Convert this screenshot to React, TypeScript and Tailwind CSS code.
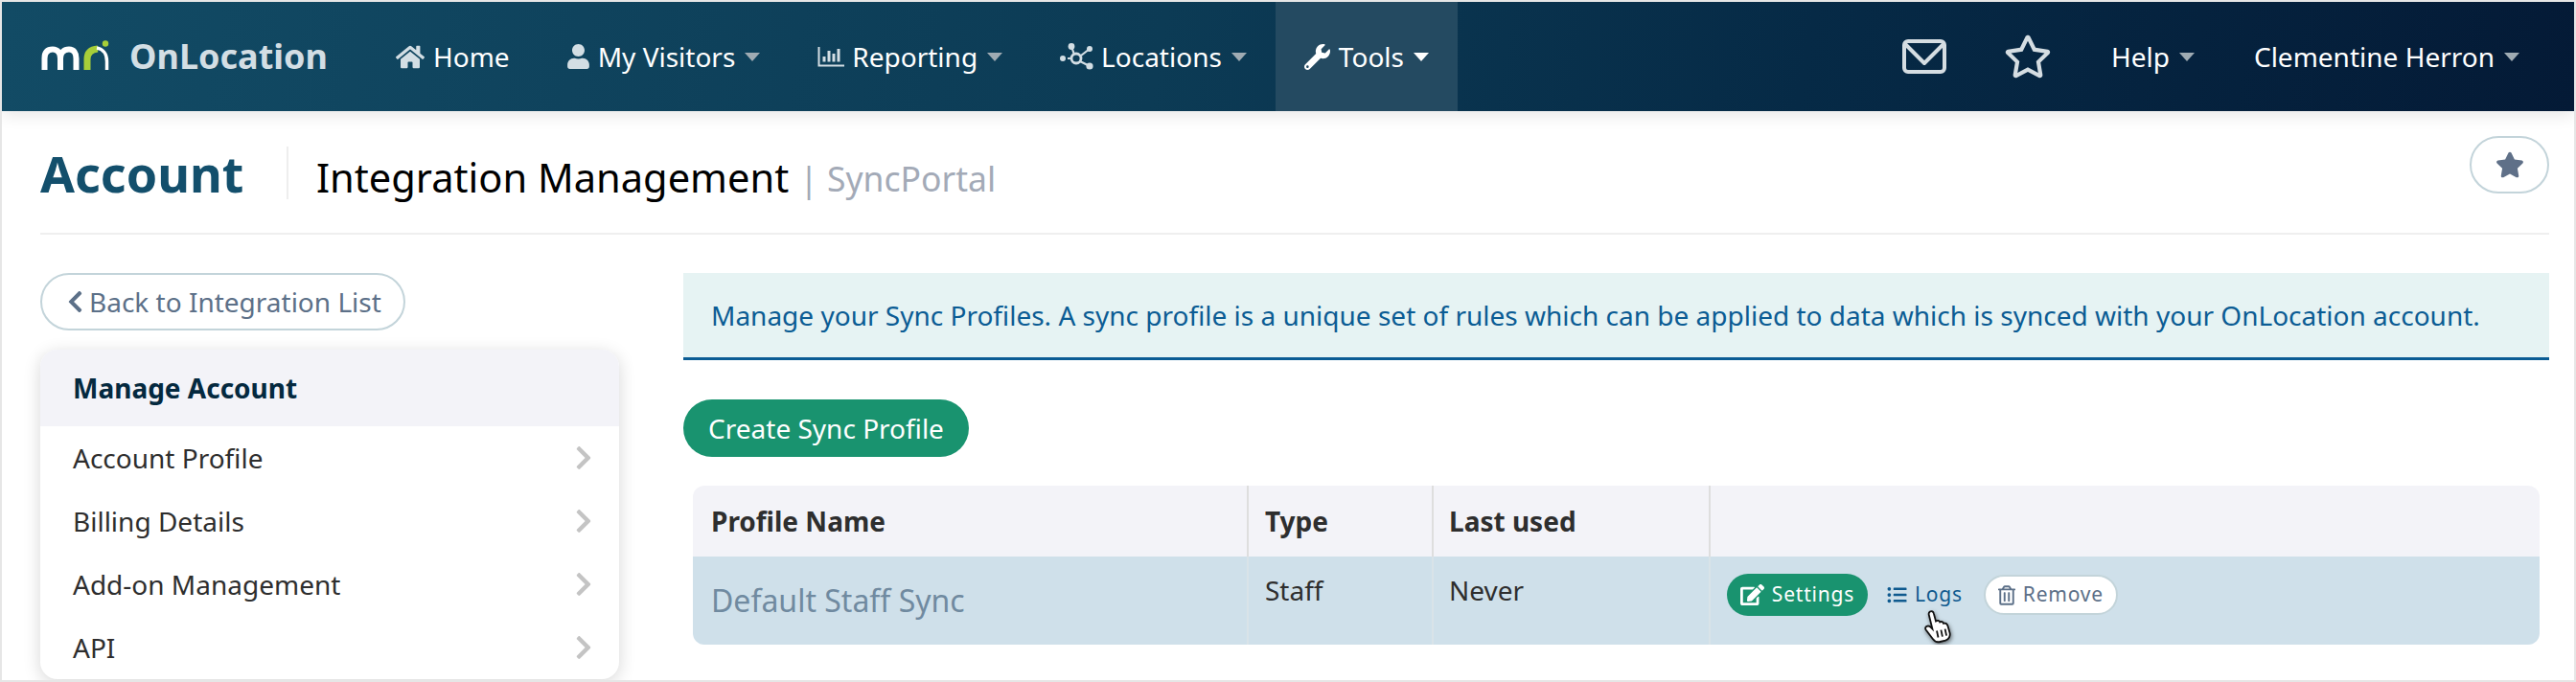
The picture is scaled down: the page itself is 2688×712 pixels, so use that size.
import { FaHome, FaUser, FaWrench, FaStar, FaRegStar, FaChevronLeft, FaChevronRight, FaEdit, FaListUl, FaRegTrashAlt } from 'react-icons/fa';

function Caret({ active }: { active?: boolean }) {
  return (
    <span
      className={`ml-[10px] h-0 w-0 border-x-[8px] border-t-[9px] border-x-transparent ${
        active ? 'border-t-white' : 'border-t-[#9fabb3]'
      }`}
    />
  );
}

function MriLogo() {
  return (
    <svg viewBox="0 0 72 34" className="h-[34px] w-[72px]" fill="none" strokeWidth="6">
      <path d="M4.5 31V19C4.5 12 8 9.5 13 9.5C18 9.5 21 13 21 19V31" stroke="#fff" />
      <path d="M21 19C21 12.5 25 9.5 30 9.5C35 9.5 37.5 13 37.5 19V31" stroke="#fff" />
      <path d="M49 31V20C49 13 53 9.5 60 9" stroke="#a6ce39" strokeWidth="7" />
      <path d="M59 8C65 9 69.5 14 69.5 22V31" stroke="#fff" strokeWidth="3.5" />
      <circle cx="68" cy="3.5" r="3.2" fill="#a6ce39" />
    </svg>
  );
}

function ReportIcon() {
  return (
    <svg viewBox="0 0 28 22" className="h-[22px] w-[28px]" fill="none" stroke="#d3dee4" strokeWidth="2">
      <path d="M1.5 1V20.5H28" />
      <path d="M7 16.5V11M12 16.5V5M17 16.5V8M22 16.5V3" strokeWidth="3" />
    </svg>
  );
}

function NodesIcon() {
  return (
    <svg viewBox="0 0 35 28" className="h-[28px] w-[35px]" fill="#d3dee4">
      <path d="M8 16H11M12 3.5L15 12M22 13L31 6M21 19L31 24" stroke="#d3dee4" strokeWidth="2.2" fill="none" />
      <circle cx="12" cy="3.5" r="3.4" />
      <circle cx="3" cy="16" r="3" />
      <circle cx="31" cy="6" r="3" />
      <circle cx="31" cy="24" r="3.6" />
      <circle cx="17" cy="16" r="5" fill="none" stroke="#d3dee4" strokeWidth="2.8" />
    </svg>
  );
}

function MailIcon() {
  return (
    <svg viewBox="0 0 46 36" className="h-[36px] w-[46px]" fill="none" stroke="#d5dde2" strokeWidth="4">
      <rect x="2" y="2" width="42" height="32" rx="4" />
      <path d="M3 5L23 25L43 5" strokeLinejoin="round" />
    </svg>
  );
}

function HandCursor() {
  return (
    <svg viewBox="0 0 30 36" className="absolute left-[8px] top-[31px] h-[36px] w-[30px] drop-shadow-[1px_2px_2px_rgba(0,0,0,0.5)]">
      <path
        d="M7 2.5C8.6 1.5 10.4 2.6 10.8 4.4L13 12.5C14.5 11.2 16.6 11.8 17.2 13.4C18.6 12.5 20.6 13.2 21 14.8C22.8 14.3 24.8 15.4 25.5 17.4L27.5 24.5C28.5 28 26.5 31.5 23 32.7L17.5 34C14 34.8 11.5 33.5 9.8 31L2.6 21.5C1.6 20 2.2 18.4 3.6 17.8C5 17.2 6.8 17.8 8 19.2L9.4 20.6L5.8 6C5.4 4.6 5.8 3.3 7 2.5Z"
        fill="#fff"
        stroke="#111"
        strokeWidth="1.8"
      />
      <path d="M14 22.5L15.5 29.5M18.4 21.6L19.9 28.6M22.6 20.6L24.1 27.6" stroke="#111" strokeWidth="1.8" />
    </svg>
  );
}

const navItems = [
  { label: 'Home', icon: <FaHome className="h-[27px] w-[30px] text-[#d3dee4]" />, gap: 'mr-[9px]', menu: false },
  { label: 'My Visitors', icon: <FaUser className="h-[26px] w-[23px] text-[#d3dee4]" />, gap: 'mr-[9px]', menu: true },
  { label: 'Reporting', icon: <ReportIcon />, gap: 'mr-[8px]', menu: true },
  { label: 'Locations', icon: <NodesIcon />, gap: 'mr-[8px]', menu: true },
];

const sideLinks = ['Account Profile', 'Billing Details', 'Add-on Management', 'API'];

export default function App() {
  return (
    <div className="h-[712px] w-[2688px] overflow-hidden border-2 border-[#e6e6e6] bg-white font-['Noto_Sans',sans-serif]">
      <nav className="relative z-10 flex h-[114px] items-center bg-[linear-gradient(100deg,#124b65_0%,#0c3b55_45%,#062a46_70%,#041a36_100%)] pl-[40px] pr-[57px] shadow-[0_4px_16px_rgba(0,0,0,0.1)]">
        <MriLogo />
        <span className="ml-[21px] mr-[44px] w-[204px] whitespace-nowrap text-[36px] font-bold text-[#d3dee4]">OnLocation</span>
        {navItems.map((item) => (
          <a key={item.label} className="flex h-full items-center px-[30px] text-[28px] text-white">
            <span className={`flex items-center ${item.gap}`}>{item.icon}</span>
            {item.label}
            {item.menu && <Caret />}
          </a>
        ))}
        <a className="flex h-full items-center bg-[#244a61] px-[30px] text-[28px] text-white">
          <FaWrench className="mr-[9px] h-[27px] w-[27px]" />
          Tools
          <Caret active />
        </a>
        <div className="ml-auto flex items-center text-[28px] text-white">
          <MailIcon />
          <FaRegStar className="ml-[60px] h-[48px] w-[50px] text-[#d5dde2]" />
          <a className="ml-[62px] flex items-center">
            Help
            <Caret />
          </a>
          <a className="ml-[62px] flex items-center">
            Clementine Herron
            <Caret />
          </a>
        </div>
      </nav>

      <div className="pl-[40px] pr-[26px]">
        <header className="flex h-[129px] items-center border-b-2 border-[#efefef]">
          <h1 className="mt-[1px] w-[259px] border-r-2 border-[#eeeeee] text-[52px] font-bold leading-[55px] text-[#134f6c]">Account</h1>
          <h2 className="ml-[29px] mt-[12px] whitespace-nowrap text-[41.6px] leading-[55px] text-black">Integration Management</h2>
          <span className="ml-[11px] mt-[14px] whitespace-nowrap text-[35.5px] leading-[55px] text-[#a3aab7]">| SyncPortal</span>
          <button className="mb-[16px] ml-auto flex h-[60px] w-[83px] items-center justify-center rounded-full border-2 border-[#c3d4da]">
            <FaStar className="h-[30px] w-[30px] text-[#5f7088]" />
          </button>
        </header>

        <div className="flex gap-[67px] pt-[40px]">
          <aside className="w-[604px] shrink-0">
            <button className="flex h-[60px] w-[381px] items-center rounded-full border-2 border-[#c3d4da] pl-[26px] text-[28px] text-[#5c7088]">
              <FaChevronLeft className="mr-[6px] h-[26px] w-[17px]" />
              Back to Integration List
            </button>
            <div className="mt-[20px] rounded-[18px] bg-white shadow-[0_4px_18px_rgba(0,0,0,0.16)]">
              <div className="flex h-[80px] items-center rounded-t-[18px] bg-[#f3f3f8] pl-[34px] text-[28px] font-bold text-[#04293f]">
                Manage Account
              </div>
              {sideLinks.map((link) => (
                <div key={link} className="flex h-[66px] items-center justify-between pl-[34px] pr-[28px] text-[28px] text-[#2e2e2e]">
                  {link}
                  <FaChevronRight className="h-[28px] w-[18px] text-[#c4c4c4]" />
                </div>
              ))}
            </div>
          </aside>

          <main className="min-w-0 flex-1">
            <div className="flex h-[91px] items-center border-b-[3px] border-[#0b5c94] bg-[#e6f3f3] pl-[29px] text-[28px] text-[#0b5c94]">
              Manage your Sync Profiles. A sync profile is a unique set of rules which can be applied to data which is synced with your OnLocation account.
            </div>
            <button className="mt-[41px] flex h-[60px] w-[298px] items-center justify-center rounded-full bg-[#19936f] text-[28px] text-white">
              Create Sync Profile
            </button>
            <div className="ml-[10px] mr-[10px] mt-[30px] overflow-hidden rounded-[12px]">
              <table className="w-full table-fixed border-collapse text-[28px] text-[#2e2e2e]">
                <colgroup>
                  <col className="w-[579px]" />
                  <col className="w-[193px]" />
                  <col className="w-[289px]" />
                  <col />
                </colgroup>
                <thead>
                  <tr className="h-[74px] bg-[#f3f3f8] text-left">
                    <th className="border-r-2 border-[#dedede] pl-[19px] font-bold">Profile Name</th>
                    <th className="border-r-2 border-[#dedede] pl-[17px] font-bold">Type</th>
                    <th className="border-r-2 border-[#dedede] pl-[16px] font-bold">Last used</th>
                    <th />
                  </tr>
                </thead>
                <tbody>
                  <tr className="h-[92px] bg-[#cfe0ea] align-top">
                    <td className="border-r-2 border-[#d9e3e8] pl-[19px] pt-[22px] text-[32px] text-[#708aa0]">Default Staff Sync</td>
                    <td className="border-r-2 border-[#d9e3e8] pl-[17px] pt-[14px]">Staff</td>
                    <td className="border-r-2 border-[#d9e3e8] pl-[16px] pt-[14px]">Never</td>
                    <td className="pl-[17px] pt-[18px]">
                      <div className="flex items-center text-[21px] tracking-[0.8px]">
                        <button className="flex h-[44px] w-[147px] items-center justify-center rounded-full bg-[#19936f] text-white">
                          <FaEdit className="mr-[8px] h-[24px] w-[25px]" />
                          Settings
                        </button>
                        <a className="relative ml-[20px] flex items-center text-[#0f5a8f]">
                          <FaListUl className="mr-[8px] h-[20px] w-[21px]" />
                          Logs
                          <span className="absolute left-[30px] top-0">
                            <HandCursor />
                          </span>
                        </a>
                        <button className="ml-[22px] flex h-[42px] w-[140px] items-center justify-center rounded-full border-2 border-[#c3d4da] bg-white text-[#5c7088]">
                          <FaRegTrashAlt className="mr-[8px] h-[21px] w-[18px]" />
                          Remove
                        </button>
                      </div>
                    </td>
                  </tr>
                </tbody>
              </table>
            </div>
          </main>
        </div>
      </div>
    </div>
  );
}
